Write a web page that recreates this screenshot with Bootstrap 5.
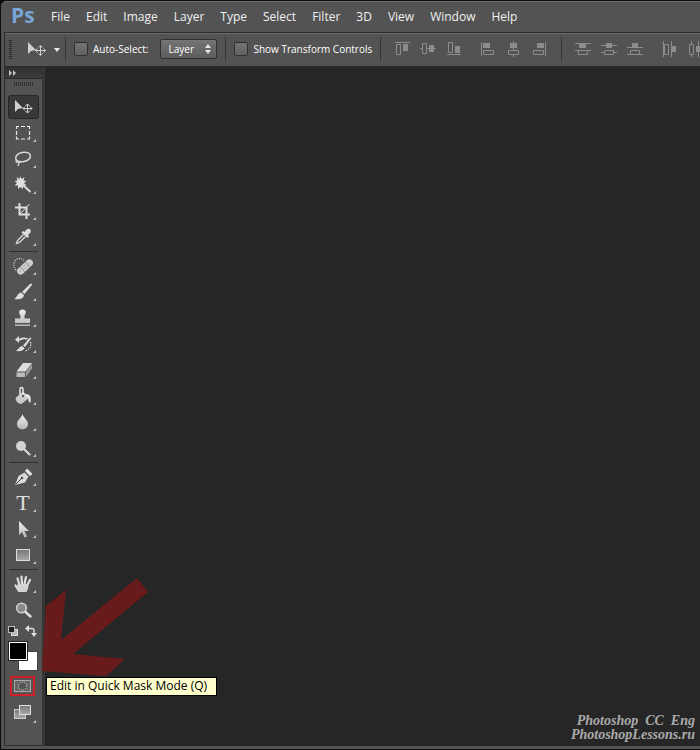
<!DOCTYPE html>
<html lang="en">
<head>
<meta charset="utf-8">
<meta name="viewport" content="width=device-width, initial-scale=1">
<title>Photoshop CC</title>
<link href="https://cdn.jsdelivr.net/npm/bootstrap@5.3.0/dist/css/bootstrap.min.css" rel="stylesheet">
<style>
body{background:#0c0c0c;font-family:"Open Sans","Noto Sans",sans-serif;color:#f0f0f0;font-size:12px;line-height:16px}
.app-frame{background:#535353;border:1px solid #0c0c0c;border-right:0;border-top-left-radius:6px;box-shadow:inset 0 1px #707070;padding:0 0 3px 3px}
.menu-bar{height:31px;padding-left:7px}
.ps-logo{color:#78a5d6;font-size:21px;line-height:28px;font-weight:700;width:40px;padding-bottom:3px}
.menu-list{gap:16px}
.menu-list a{color:#f0f0f0;text-decoration:none}
.tool-options{height:35px;border:solid #2b2b2b;border-width:1px 0 1px 1px;box-shadow:inset 0 1px #6a6a6a;font-size:10px;color:#fff;padding:0 0 2px 4px;overflow:hidden}
.tool-options>*{flex-shrink:0}
.bar-line{width:1px;height:24px;background:#343434}
.gap-before{margin-left:9px}
.gap-wide{margin-left:12px}
.form-check .opt-check{width:14px;height:14px;margin:0 5px 0 0;padding:0;border:1px solid #303030;border-radius:2px;background-color:#6c6c6c;background-image:linear-gradient(#747474,#626262);float:none}
.layer-pick{width:57px;height:20px;padding:0 0 0 7px;border:1px solid #303030;border-radius:2px;color:#fff;font-size:10px;line-height:16px;background:url("data:image/svg+xml,%3Csvg xmlns='http://www.w3.org/2000/svg' width='8' height='10'%3E%3Cpath d='M1 4h6L4 0zM1 6h6L4 10z' fill='%23e8e8e8'/%3E%3C/svg%3E") no-repeat right 4px center/8px 10px,linear-gradient(#757575,#5c5c5c)}
.al-btn{width:26px;height:18px;border:0;padding:0;background:none;display:block}
.al-btn svg{display:block;fill:#8c8c8c;stroke:none}
.al-btn .o{fill:none;stroke:#8c8c8c}
.tool-box{width:41px;border:solid #2e2e2e;border-width:0 3px 1px 1px;border-right-color:#363636}
.tool-head{height:12px;background:linear-gradient(#303030,#3c3c3c);border-bottom:1px solid #2b2b2b}
.tool-btn{display:block;height:26px;width:100%;padding:0;border:0;background:none}
.tool-btn svg{display:block}
.tool-line{height:1px;margin:1px 4px;background:#303030;border:0;opacity:1}
.swatches{height:50px}
.quick-row{height:28px}
.hint{left:41px;top:4px;width:171px;height:19px;background:#ffffcd;border:1px solid #000;color:#000;padding:0 0 0 3px;line-height:16px;white-space:nowrap;z-index:3}
.red-arrow{left:36px;top:-97px;z-index:2;pointer-events:none}
.art-board{background:#262626}
.credit{font-family:"Liberation Serif",cursive;font-style:italic;font-weight:700;font-size:14px;line-height:14px;color:#aaa;padding:0 5px 4px 0}
</style>
<script src="https://cdn.jsdelivr.net/npm/bootstrap@5.3.0/dist/js/bootstrap.bundle.min.js"></script>
</head>
<body>
<div class="app-frame min-vh-100 d-flex flex-column overflow-hidden">
<header class="menu-bar d-flex align-items-center">
  <span class="ps-logo">Ps</span>
  <nav class="menu-list d-flex" aria-label="Main menu">
    <a href="#">File</a><a href="#">Edit</a><a href="#">Image</a><a href="#">Layer</a><a href="#">Type</a><a href="#">Select</a><a href="#">Filter</a><a href="#">3D</a><a href="#">View</a><a href="#">Window</a><a href="#">Help</a>
  </nav>
</header>

<div class="tool-options d-flex align-items-center">
  <svg width="52" height="20" aria-hidden="true">
    <path d="M1.500 1v19" stroke="#2b2b2b" stroke-width="3" stroke-dasharray="1 1"/>
    <path d="M19 3v12l3-3 5-1z" fill="#d0d0d0"/>
    <path d="M27 11.500h9M31.500 7v9M29.500 8.500l2-2 2 2M29.500 14.500l2 2 2-2M28.500 9.500l-2 2 2 2M34.500 9.500l2 2-2 2" fill="none" stroke="#d0d0d0"/>
    <path d="M45 9h6l-3 4z" fill="#eee"/>
  </svg>
  <span class="bar-line ms-1"></span>
  <div class="form-check d-flex align-items-center p-0 m-0 ms-2">
    <input class="form-check-input opt-check" type="checkbox" id="auto"><label for="auto">Auto-Select:</label>
  </div>
  <select class="layer-pick form-select gap-wide" aria-label="Auto-select target"><option>Layer</option></select>
  <span class="bar-line ms-2"></span>
  <div class="form-check d-flex align-items-center p-0 m-0 ms-2">
    <input class="form-check-input opt-check" type="checkbox" id="xform"><label for="xform">Show Transform Controls</label>
  </div>
  <span class="bar-line ms-2"></span>
  <div class="d-flex ms-2">
    <button class="al-btn" aria-label="Align top edges"><svg width="26" height="18"><path d="M6 2h15v1H6zM14 4h5v7h-5z"/><path class="o" d="M7.500 4.500h4v10h-4z"/></svg></button>
    <button class="al-btn" aria-label="Align vertical centers"><svg width="26" height="18"><path d="M5 8h3v1H5zM12 8h9v1h-9zM14 5h5v7h-5z"/><path class="o" d="M7.500 3.500h4v10h-4z"/></svg></button>
    <button class="al-btn" aria-label="Align bottom edges"><svg width="26" height="18"><path d="M6 14h14v1H6zM14 6h5v7h-5z"/><path class="o" d="M7.500 2.500h4v10h-4z"/></svg></button>
  </div>
  <div class="d-flex ms-2">
    <button class="al-btn" aria-label="Align left edges"><svg width="26" height="18"><path d="M6 2h1v14H6zM8 3h7v5H8z"/><path class="o" d="M8.500 10.500h10v4h-10z"/></svg></button>
    <button class="al-btn" aria-label="Align horizontal centers"><svg width="26" height="18"><path d="M12 1h1v9h-1zM12 15h1v2h-1zM9 3h7v5H9z"/><path class="o" d="M7.500 10.500h10v4h-10z"/></svg></button>
    <button class="al-btn" aria-label="Align right edges"><svg width="26" height="18"><path d="M18 2h1v14h-1zM10 3h7v5h-7z"/><path class="o" d="M6.500 10.500h10v4h-10z"/></svg></button>
  </div>
  <span class="bar-line ms-2"></span>
  <div class="d-flex ms-2">
    <button class="al-btn" aria-label="Distribute top edges"><svg width="26" height="18"><path d="M5 3h16v1H5zM5 10h16v1H5zM9 3h7v5H9z"/><path class="o" d="M8.500 10.500h9v4h-9z"/></svg></button>
    <button class="al-btn" aria-label="Distribute vertical centers"><svg width="26" height="18"><path d="M5 5h16v1H5zM5 12h3v1H5zM18 12h3v1h-3zM10 3h6v5h-6z"/><path class="o" d="M8.500 10.500h9v4h-9z"/></svg></button>
    <button class="al-btn" aria-label="Distribute bottom edges"><svg width="26" height="18"><path d="M5 7h16v1H5zM5 14h16v1H5zM10 3h6v5h-6z"/><path class="o" d="M8.500 10.500h9v4h-9z"/></svg></button>
  </div>
  <div class="d-flex gap-before">
    <button class="al-btn" aria-label="Distribute left edges"><svg width="26" height="18"><path d="M6 1h1v16H6zM14 1h1v16h-1zM14 6h5v6h-5z"/><path class="o" d="M7.500 4.500h4v10h-4z"/></svg></button>
    <button class="al-btn" aria-label="Distribute horizontal centers"><svg width="26" height="18"><path d="M8 1h1v3H8zM8 14h1v3H8zM15 1h1v16h-1zM13 6h5v6h-5z"/><path class="o" d="M6.500 4.500h4v10h-4z"/></svg></button>
  </div>
</div>

<main class="d-flex flex-grow-1">
  <aside class="tool-box flex-shrink-0" aria-label="Tools">
    <div class="tool-head"><svg class="d-block" width="37" height="11" aria-hidden="true"><path d="M4 3v6l3-3zM8 3v6l3-3z" fill="#c8c8c8"/></svg></div>
    <svg class="d-block" width="37" height="15" aria-hidden="true"><path d="M9 5h20" stroke="#303030" stroke-width="4" stroke-dasharray="1 1"/></svg>
    <svg width="0" height="0" class="position-absolute" aria-hidden="true"><defs>
      <linearGradient id="g" x2="0" y2="1"><stop stop-color="#777"/><stop offset="1" stop-color="#aaa"/></linearGradient>
      <linearGradient id="h" x2="0" y2="1"><stop stop-color="#f0f0f0"/><stop offset="1" stop-color="#b8b8b8"/></linearGradient>
      <path id="c" d="M31 19v3h-3z" fill="#c4c4c4"/></defs></svg>
    <button class="tool-btn" aria-label="Move"><svg width="37" height="26"><rect x="3.500" y="1.500" width="30" height="23" rx="2" fill="#383838" stroke="#272727"/><path d="M10 6v12l3-3 5-1z" fill="#d0d0d0"/><path d="M18 14.500h9M22.500 10v9M20.500 12l2-2 2 2M20.500 17l2 2 2-2M20 12.500l-2 2 2 2M25 12.500l2 2-2 2" fill="none" stroke="#d4d4d4"/></svg></button>
    <button class="tool-btn" aria-label="Rectangular marquee"><svg width="37" height="26"><path d="M11.500 9V6.500H14M16 6.500h4M22 6.500h2.500V9M24.500 11v4M24.500 16.500V19H22M20 19h-4M14 19h-2.500v-2.500M11.500 15v-4" fill="none" stroke="#e8e8e8" stroke-width="1.200"/><use href="#c"/></svg></button>
    <button class="tool-btn" aria-label="Lasso"><svg width="37" height="26"><ellipse cx="18" cy="11" rx="7.500" ry="4.700" transform="rotate(-12 18 11)" fill="none" stroke="#d8d8d8" stroke-width="1.500"/><path d="M12 14c-2 1-1 3 1 2s3-1 1 1l-1 3" fill="none" stroke="#d8d8d8" stroke-width="1.300"/><use href="#c"/></svg></button>
    <button class="tool-btn" aria-label="Magic wand"><svg width="37" height="26"><path d="M15.500 4l1 3 3-2-1 3.500 3 .5-2.500 2 2.500 2.500-3.500 0 0 3.500-2.500-2-2.500 2 0-3.500-3.500 0 2.500-2.500-2.500-2 3-.5-1-3.500 3 2z" fill="#e0e0e0"/><path d="M18 13l7.500 7" stroke="#d8d8d8" stroke-width="2"/><use href="#c"/></svg></button>
    <button class="tool-btn" aria-label="Crop"><svg width="37" height="26"><path d="M10 9.500h11.500V21M14.500 5v11.500H25" fill="none" stroke="#ddd" stroke-width="2"/><path d="M15 16l9.500-10" stroke="#ddd"/><use href="#c"/></svg></button>
    <button class="tool-btn" aria-label="Eyedropper"><svg width="37" height="26"><path d="M18.500 10.500l-6 6-1 3 3-1 6-6" fill="#555" stroke="#ddd" stroke-width="1.300"/><path d="M16.500 8.500l1.500-1.500 1.500 1 2-2.500c3-2 5.500.5 3.700 3.500l-2.200 2 1 1.500-1.500 1.500z" fill="#ddd"/><use href="#c"/></svg></button>
    <hr class="tool-line">
    <button class="tool-btn" aria-label="Healing brush"><svg width="37" height="26"><g transform="rotate(-43 20 14)"><rect x="10.500" y="10.500" width="19" height="7" rx="3.500" fill="#d0d0d0"/><path d="M16.500 10.500v7M23.500 10.500v7" stroke="#999"/><path d="M18.500 12.500h4M18.500 15.500h4M13 14h2M25 14h2" stroke="#888" stroke-dasharray="1 1"/></g><path d="M11 17C7 13 9 6 14 5.500c2 0 4 .5 5 2" fill="none" stroke="#eee" stroke-dasharray="1 1.400" stroke-width="1.200"/><use href="#c"/></svg></button>
    <button class="tool-btn" aria-label="Brush"><svg width="37" height="26"><path d="M26.500 4.500c1 .5.500 1.500 0 2L19.500 15 17 13l8-8z" fill="#ddd"/><path d="M16 13.500l3 2.500c-.5 4-5 5-10 4 3-1 3-5.500 7-6.500z" fill="#ddd"/><use href="#c"/></svg></button>
    <button class="tool-btn" aria-label="Clone stamp"><svg width="37" height="26"><path d="M17.500 4.500c4 0 4 4 2 6v3H25V18H10v-4.500h5.500v-3c-2-2-2-6 2-6zM10 19.500h15V21H10z" fill="url(#h)"/><use href="#c"/></svg></button>
    <button class="tool-btn" aria-label="History brush"><svg width="37" height="26"><path d="M14 5v3c4-2.500 9-1.500 10 1-3-1.500-7-1-10 1v2l-4-3.500z" fill="#ddd"/><path d="M26.500 7L20 16l-2-1.500 7-8zM17 15l2.500 2c-1 3-4.500 3.500-9 3 3-1 3-4 6.500-5z" fill="#ddd"/><path d="M25.500 11c1 4 0 7-5 9" fill="none" stroke="#eee" stroke-dasharray="1.500 1"/><use href="#c"/></svg></button>
    <button class="tool-btn" aria-label="Eraser"><svg width="37" height="26"><path d="M18 6h9l-6.500 8.500h-9z" fill="#ddd"/><path d="M11.500 15.500h8.500V20h-8.500z" fill="#bbb"/><path d="M21 14.500L27 7v4.500L21 20z" fill="#999"/><use href="#c"/></svg></button>
    <button class="tool-btn" aria-label="Paint bucket"><svg width="37" height="26"><path d="M10.500 15L18 8.500l6.500 6-8 6.500c-3 0-6-3-6-6z" fill="#ccc"/><path d="M15 12V6c0-2 3-2 3 0v6" fill="none" stroke="#e8e8e8" stroke-width="1.500"/><circle cx="18" cy="13" r="1.200" fill="#555"/><path d="M20 11c5 0 6.500 2 5.500 9l-2-1.500c0-3 0-4-3.500-5.500z" fill="#e8e8e8"/><use href="#c"/></svg></button>
    <button class="tool-btn" aria-label="Blur"><svg width="37" height="26"><path d="M17.500 5c1 4 5.500 6 5.500 10 0 7-11 7-11 0 0-4 4.500-6 5.500-10z" fill="url(#h)"/><use href="#c"/></svg></button>
    <button class="tool-btn" aria-label="Dodge"><svg width="37" height="26"><circle cx="16" cy="11" r="5" fill="#d4d4d4"/><path d="M19 14l5.500 5.500" stroke="#ddd" stroke-width="2" stroke-linecap="round"/><use href="#c"/></svg></button>
    <hr class="tool-line">
    <button class="tool-btn" aria-label="Pen"><svg width="37" height="26"><path d="M10 21l3.500-9 6-3.500 4 4-3.500 6z" fill="#d8d8d8"/><path d="M10.500 20.500l6.500-6.500" stroke="#444"/><circle cx="17" cy="14" r="1.200" fill="#444"/><path d="M20 7l2-2.500 5.500 5.500L25 12z" fill="#e4e4e4"/><use href="#c"/></svg></button>
    <button class="tool-btn" aria-label="Type"><svg width="37" height="26"><text x="18" y="20" text-anchor="middle" font-family="Liberation Serif,serif" font-size="22" fill="#e0e0e0">T</text><use href="#c"/></svg></button>
    <button class="tool-btn" aria-label="Path selection"><svg width="37" height="26"><path d="M14 5v14l3-3 2.500 5.500 2.500-1-2.500-5.500H24z" fill="url(#h)"/><use href="#c"/></svg></button>
    <button class="tool-btn" aria-label="Rectangle"><svg width="37" height="26"><rect x="11.500" y="7.500" width="13" height="11" fill="url(#g)" stroke="#ddd"/><use href="#c"/></svg></button>
    <hr class="tool-line">
    <button class="tool-btn" aria-label="Hand"><svg width="37" height="26"><path d="M14 20l-3.500-5.500M14.500 14L12.500 7.500M17 13L16.500 5.500M19.500 13L21 6M22 14.500l3-5.500" stroke="#e0e0e0" stroke-width="2.200" stroke-linecap="round" fill="none"/><path d="M13 13h9.500l1 1.500c0 3-1 4-2 6.500h-7.500l-3-5z" fill="#d4d4d4"/><use href="#c"/></svg></button>
    <button class="tool-btn" aria-label="Zoom"><svg width="37" height="26"><circle cx="16.500" cy="11" r="4.800" fill="#888" stroke="#d0d0d0" stroke-width="1.600"/><path d="M20.500 15l5 4.500" stroke="#ddd" stroke-width="2.500" stroke-linecap="round"/></svg></button>
    <div class="swatches"><svg class="d-block" width="37" height="50" role="img" aria-label="Foreground black, background white"><rect x="6.500" y="6.500" width="6" height="6" fill="#bbb" stroke="#ddd"/><rect x="3.500" y="3.500" width="6" height="6" fill="#222" stroke="#bbb"/><path d="M22 5.500h5q2 0 2 2V12" fill="none" stroke="#ddd" stroke-width="1.400"/><path d="M24 2v7l-4-3.500zM26 10h6l-3 4z" fill="#ddd"/><rect x="13.500" y="28.500" width="19" height="19" fill="#fff" stroke="#444"/><rect x="3.500" y="18.500" width="19" height="19" stroke="#222"/><rect x="4.500" y="19.500" width="17" height="17" fill="#000" stroke="#fff"/></svg></div>
    <div class="quick-row position-relative">
      <button class="tool-btn" aria-label="Quick mask mode" aria-describedby="tip"><svg width="37" height="26"><rect x="6" y="4" width="23" height="18" fill="none" stroke="#d0202a" stroke-width="2"/><rect x="9.500" y="7.500" width="16" height="11" fill="#666" stroke="#aaa"/><circle cx="17.500" cy="13" r="4" fill="#555" stroke="#ddd" stroke-dasharray="1 1.200"/></svg></button>
      <svg class="red-arrow position-absolute" width="109" height="102" aria-hidden="true"><path d="M96 2l11 14-75 62 52 5-19 17-64-5L5 30 25 14l-5 50z" fill="#691b1b"/></svg>
      <div id="tip" role="tooltip" class="hint position-absolute">Edit in Quick Mask Mode (Q)</div>
    </div>
    <button class="tool-btn" aria-label="Screen mode"><svg width="37" height="26"><rect x="9.500" y="8.500" width="11" height="9" fill="url(#g)" stroke="#ccc"/><rect x="14.500" y="4.500" width="11" height="9" fill="url(#g)" stroke="#e0e0e0"/><use href="#c"/></svg></button>
  </aside>
  <section class="art-board flex-grow-1 d-flex align-items-end justify-content-end" aria-label="Canvas">
    <div class="credit text-end">Photoshop &nbsp;CC &nbsp;Eng<br>PhotoshopLessons.ru</div>
  </section>
</main>
</div>
</body>
</html>
